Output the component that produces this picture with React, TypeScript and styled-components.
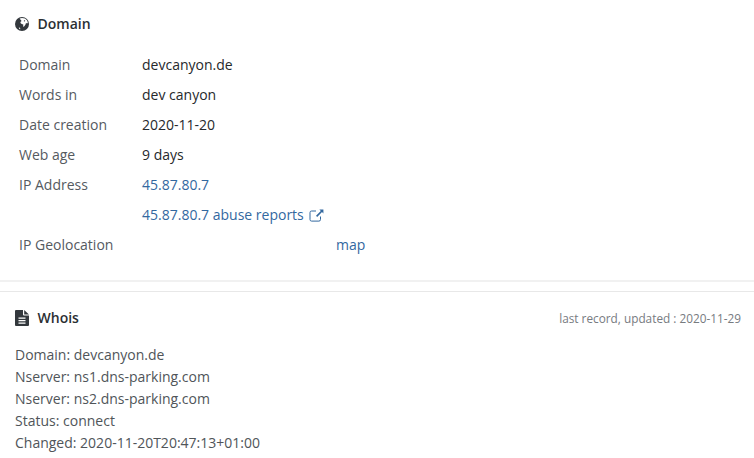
import React from "react";
import styled, { createGlobalStyle } from "styled-components";

const Global = createGlobalStyle`
  html, body { margin: 0; padding: 0; background: #fff; }
  body { font-family: "Open Sans", sans-serif; font-size: 14px; color: #212529; overflow: hidden; }
`;
const Page = styled.div`width: 754px; height: 458px; overflow: hidden;`;
const DomainSection = styled.section`padding: 14px 15px 20px; border-bottom: 2px solid #f1f1f1;`;
const WhoisSection = styled.section`margin-top: 9px; border-top: 1px solid #e8e8e8; padding: 16px 13px 0 15px;`;
const Header = styled.div`display: flex; align-items: center; height: 20px; justify-content: space-between;`;
const Title = styled.h2`
  display: flex; align-items: center; gap: 8.5px; margin: 0;
  font-size: 14px; font-weight: 600; line-height: 20px; color: #2b2f33;
  svg { color: #33383d; flex: none; }
`;
const Meta = styled.span`font-size: 11.8px; color: #777b7f; line-height: 20px;`;
const Table = styled.div`display: flex; flex-direction: column; margin-top: 16px; padding-left: 4px;`;
const Row = styled.div`display: grid; grid-template-columns: 123px 194px auto; height: 30px; align-items: center; line-height: 20px;`;
const Label = styled.span`color: #555a5f;`;
const Value = styled.span`color: #26292c;`;
const Link = styled.a`color: #33689f; text-decoration: none; display: inline-flex; align-items: center; gap: 5px;`;
const WideCell = styled.span`grid-column: 2 / 4;`;
const WhoisBody = styled.div`margin-top: 16px; color: #505559; line-height: 22px;`;

const External = () => (
  <svg width="15" height="13" viewBox="0 0 15 13" fill="none" stroke="currentColor" strokeWidth="1">
    <path d="M11.5 7.5v3a1.6 1.6 0 0 1-1.6 1.6H2.6A1.6 1.6 0 0 1 1 10.5V3.6A1.6 1.6 0 0 1 2.6 2H7" />
    <path d="M14.4.5h-4l1.4 1.4-4.8 4.8 1.2 1.2 4.8-4.8 1.4 1.4z" fill="currentColor" stroke="none" />
  </svg>
);

const Globe = () => (
  <svg width="14" height="14" viewBox="0 0 14 14">
    <circle cx="7" cy="7" r="7" fill="currentColor" />
    <path d="M4.6 1.6 7 1l3 .5 2 1.7.9 2.2-.7 1.2-1.2-.5-.6 1.6-1.3 1.8-1 .2.2-2.2-1.6-.5-1.3-.9.2-1.4 1-.6-.8-1.2zM3.8 10.5l1.2.3.4 1.4-1-.3z" fill="#fff" />
    <path d="M9 3.2l1.2.3-.3 1-1.1-.2z" fill="currentColor" />
  </svg>
);

const FileText = () => (
  <svg width="14" height="16" viewBox="0 0 14 16">
    <path d="M0 1a1 1 0 0 1 1-1h7v4.5a1 1 0 0 0 1 1h5V15a1 1 0 0 1-1 1H1a1 1 0 0 1-1-1z" fill="currentColor" />
    <path d="M9.2 0 14 4.4H9.2z" fill="currentColor" />
    <path d="M3.5 7.5h7v1.3h-7zM3.5 10h7v1.3h-7zM3.5 12.5h7v1.3h-7z" fill="#fff" />
  </svg>
);

const rows = [
  ["Domain", "devcanyon.de"],
  ["Words in", "dev canyon"],
  ["Date creation", "2020-11-20"],
  ["Web age", "9 days"],
];
const whois = [
  "Domain: devcanyon.de",
  "Nserver: ns1.dns-parking.com",
  "Nserver: ns2.dns-parking.com",
  "Status: connect",
  "Changed: 2020-11-20T20:47:13+01:00",
];

export default function App() {
  return (
    <Page>
      <Global />
      <DomainSection>
        <Header><Title><Globe />Domain</Title></Header>
        <Table>
          {rows.map(([l, v]) => (
            <Row key={l}><Label>{l}</Label><Value>{v}</Value></Row>
          ))}
          <Row><Label>IP Address</Label><WideCell><Link href="#">45.87.80.7</Link></WideCell></Row>
          <Row><Label /><WideCell><Link href="#">45.87.80.7 abuse reports <External /></Link></WideCell></Row>
          <Row><Label>IP Geolocation</Label><span /><Link href="#">map</Link></Row>
        </Table>
      </DomainSection>
      <WhoisSection>
        <Header>
          <Title><FileText />Whois</Title>
          <Meta>last record, updated : 2020-11-29</Meta>
        </Header>
        <WhoisBody>{whois.map((w) => <div key={w}>{w}</div>)}</WhoisBody>
      </WhoisSection>
    </Page>
  );
}
